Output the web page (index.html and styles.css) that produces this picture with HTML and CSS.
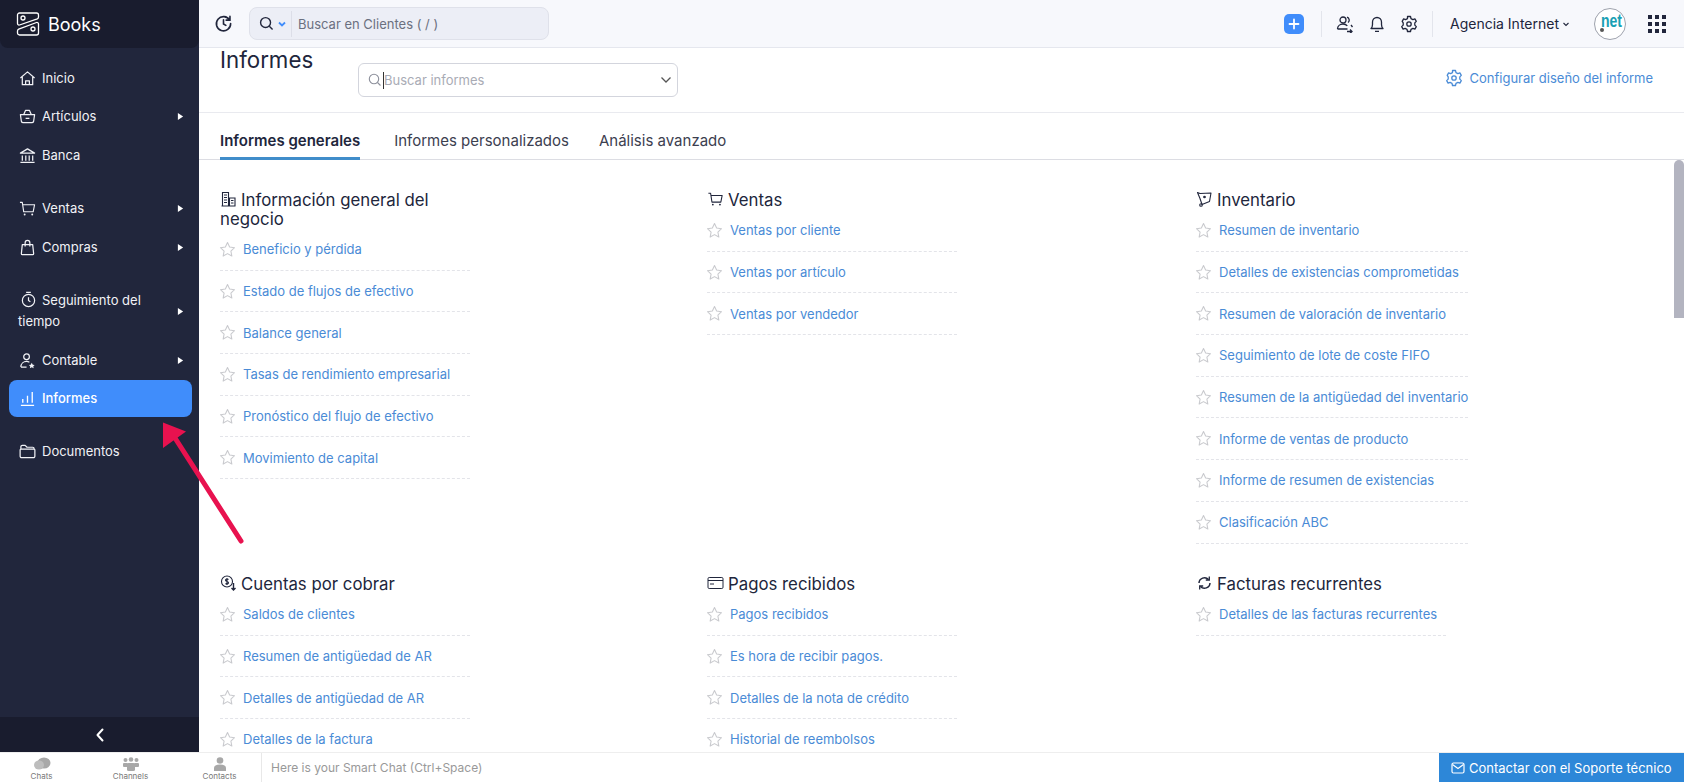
FILE: index.html
```html
<!DOCTYPE html>
<html lang="es">
<head>
<meta charset="utf-8">
<title>Informes</title>
<link rel="stylesheet" href="styles.css">
</head>
<body>
<svg class="defs" width="0" height="0" aria-hidden="true">
  <symbol id="star" viewBox="0 0 16 16"><path d="M8 1.400l2 4.300 4.600.6-3.400 3.200.9 4.700L8 11.900l-4.100 2.300.9-4.700L1.400 6.300l4.600-.6z" fill="none" stroke="currentColor" stroke-width="1" stroke-linejoin="round"/></symbol>
  <symbol id="tri" viewBox="0 0 8 10"><path d="M1 1l6 4-6 4z" fill="currentColor"/></symbol>
  <symbol id="gear" viewBox="0 0 18 18"><path d="M7.500 1.500h3l.5 2.100 1.900 1 2-.7 1.400 2.500-1.500 1.500v2.200l1.500 1.500-1.400 2.500-2-.7-1.900 1-.5 2.100h-3l-.5-2.100-1.900-1-2 .7-1.400-2.500 1.500-1.500V7.900L2.200 6.400l1.400-2.500 2 .7 1.900-1z" fill="none" stroke="currentColor" stroke-width="1.300" stroke-linejoin="round"/><circle cx="9" cy="9" r="2.200" fill="none" stroke="currentColor" stroke-width="1.300"/></symbol>
  <symbol id="cart" viewBox="0 0 18 18"><path d="M1 2.500h2.500L5 12.500h10l1.500-7.500H4" fill="none" stroke="currentColor" stroke-width="1.200" stroke-linejoin="round"/><circle cx="6" cy="15.300" r="1" fill="currentColor"/><circle cx="14" cy="15.300" r="1" fill="currentColor"/></symbol>
</svg>

<div class="app">
  <aside class="sidebar">
    <div class="brand">
      <svg class="brand-logo" viewBox="0 0 24 24" fill="none" stroke="currentColor" stroke-width="1.300" stroke-linejoin="round"><path d="M3.500 1H20.500a2 2 0 0 1 2 2V5a2 2 0 0 1-1.200 1.800L3.500 13a1.500 1.500 0 0 1-2-1.400V3a2 2 0 0 1 2-2z"/><path d="M20.500 10.500a1.500 1.500 0 0 1 2 1.400V21a2 2 0 0 1-2 2H3.500a2 2 0 0 1-2-2V19a2 2 0 0 1 1.200-1.800z"/><circle cx="7" cy="6" r="2"/><circle cx="17" cy="17" r="2"/></svg>
      <span class="brand-name">Books</span>
    </div>
    <nav class="nav">
      <a class="nav-item"><svg class="nav-ico" viewBox="0 0 18 18" fill="none" stroke="currentColor" stroke-width="1.300" stroke-linejoin="round"><path d="M1.500 8.500L9 2l7.500 6.500M3.500 7.500V15.500h11V7.500M7 15.500v-4h4v4"/></svg><span class="nav-label">Inicio</span></a>
      <a class="nav-item"><svg class="nav-ico" viewBox="0 0 18 18" fill="none" stroke="currentColor" stroke-width="1.300" stroke-linejoin="round"><path d="M1.500 7h15l-1 7a2 2 0 0 1-2 1.500h-9a2 2 0 0 1-2-1.500zM5 7l2-4.500h4L13 7M7 11h4"/></svg><span class="nav-label">Artículos</span><svg class="nav-tri"><use href="#tri"/></svg></a>
      <a class="nav-item"><svg class="nav-ico" viewBox="0 0 18 18" fill="none" stroke="currentColor" stroke-width="1.300" stroke-linejoin="round"><path d="M1.500 6.500L9 2l7.500 4.500zM3.500 9v5.500M7.200 9v5.500M10.800 9v5.500M14.500 9v5.500M1.500 16.200h15"/></svg><span class="nav-label">Banca</span></a>
      <a class="nav-item nav-gap"><svg class="nav-ico"><use href="#cart"/></svg><span class="nav-label">Ventas</span><svg class="nav-tri"><use href="#tri"/></svg></a>
      <a class="nav-item"><svg class="nav-ico" viewBox="0 0 18 18" fill="none" stroke="currentColor" stroke-width="1.300" stroke-linejoin="round"><path d="M3.500 6h11l1 9.500a1 1 0 0 1-1 1h-11a1 1 0 0 1-1-1zM6.500 8V4a2.500 2.500 0 0 1 5 0v4"/></svg><span class="nav-label">Compras</span><svg class="nav-tri"><use href="#tri"/></svg></a>
      <a class="nav-item nav-multi"><span class="nav-label"><svg class="nav-ico nav-ico-inline" viewBox="0 0 18 18" fill="none" stroke="currentColor" stroke-width="1.300"><circle cx="9" cy="10" r="6.500"/><path d="M6.500 1.500h5M9 6.500V10l2 1.500"/></svg>Seguimiento del tiempo</span><svg class="nav-tri"><use href="#tri"/></svg></a>
      <a class="nav-item"><svg class="nav-ico" viewBox="0 0 18 18" fill="none" stroke="currentColor" stroke-width="1.300"><circle cx="8" cy="5" r="3"/><path d="M2 16c0-4 3-6 6-6 1.200 0 2 .2 3 .8M2 16h6"/><path d="M13.500 11.500l1.100 1.900 2 .3-1.500 1.400.4 2-2-1-2 1 .4-2-1.500-1.400 2-.3z" fill="currentColor" stroke="none"/></svg><span class="nav-label">Contable</span><svg class="nav-tri"><use href="#tri"/></svg></a>
      <a class="nav-item nav-active"><svg class="nav-ico" viewBox="0 0 18 18" fill="none" stroke="currentColor" stroke-width="1.400"><path d="M4 13.500V9.500M9 13.500V6M14 13.500V2M2 16.200h14"/></svg><span class="nav-label">Informes</span></a>
      <a class="nav-item nav-gap"><svg class="nav-ico" viewBox="0 0 18 18" fill="none" stroke="currentColor" stroke-width="1.300" stroke-linejoin="round"><path d="M2 6V4a1.500 1.500 0 0 1 1.500-1.500h3L8.500 4.500h6A1.500 1.500 0 0 1 16 6M2 6.500h14a.8.8 0 0 1 .8.8V14a1.500 1.500 0 0 1-1.500 1.500H2.700A1.500 1.500 0 0 1 1.200 14V7.300A.8.8 0 0 1 2 6.500z"/></svg><span class="nav-label">Documentos</span></a>
    </nav>
    <div class="collapse"><svg viewBox="0 0 10 16" width="10" height="16" fill="none" stroke="currentColor" stroke-width="2" stroke-linecap="round" stroke-linejoin="round"><path d="M7.500 2.500L2.500 8l5 5.500"/></svg></div>
  </aside>

  <div class="main">
    <header class="topbar">
      <svg class="top-ico history" viewBox="0 0 20 20" fill="none" stroke="currentColor" stroke-width="1.700" stroke-linecap="round"><path d="M16.500 6.500A7.500 7.500 0 1 0 17.500 10M16.800 2.500v4h-4M10 6v4.500l2.500 1.500"/></svg>
      <div class="global-search">
        <svg class="gs-ico" viewBox="0 0 16 16" fill="none" stroke="currentColor" stroke-width="1.500"><circle cx="7" cy="7" r="5.300"/><path d="M11 11l3.500 3.500"/></svg>
        <svg class="gs-caret" viewBox="0 0 10 10" fill="none" stroke="currentColor" stroke-width="1.800"><path d="M2 3.500L5 6.500 8 3.500"/></svg>
        <span class="gs-text">Buscar en Clientes ( / )</span>
      </div>
      <div class="top-right">
        <span class="add-btn"><svg viewBox="0 0 12 12" width="12" height="12" stroke="#fff" stroke-width="1.800" stroke-linecap="round"><path d="M6 1.500v9M1.500 6h9"/></svg></span>
        <span class="vsep"></span>
        <svg class="top-ico" viewBox="0 0 18 18" fill="none" stroke="currentColor" stroke-width="1.300"><circle cx="7" cy="5" r="3"/><path d="M11 2.200a3 3 0 0 1 1 5.300M1.500 14c0-3 2.500-5 5.500-5 1.800 0 3.300.6 4.300 1.800M1.500 14h10M11 16.500h5M14 14.500l2 2-2 2M15 10l1.500 2"/></svg>
        <svg class="top-ico" viewBox="0 0 18 18" fill="none" stroke="currentColor" stroke-width="1.300" stroke-linejoin="round"><path d="M3 13.500c1-1 1.500-2 1.500-4V7a4.500 4.500 0 0 1 9 0v2.500c0 2 .5 3 1.500 4zM7 16.300h4"/></svg>
        <svg class="top-ico"><use href="#gear"/></svg>
        <span class="vsep"></span>
        <span class="org">Agencia Internet</span>
        <svg class="org-caret" viewBox="0 0 8 8" fill="none" stroke="currentColor" stroke-width="1.100"><path d="M1.500 3l2.500 2.500L6.500 3"/></svg>
        <span class="avatar"><span class="avatar-text">net</span><i class="avatar-dot"></i></span>
        <span class="apps"><i></i><i></i><i></i><i></i><i></i><i></i><i></i><i></i><i></i></span>
      </div>
    </header>

    <div class="page">
      <div class="page-head">
        <h1 class="page-title">Informes</h1>
        <div class="report-search">
          <svg class="rs-ico" viewBox="0 0 14 14" fill="none" stroke="currentColor" stroke-width="1.100"><circle cx="6" cy="6" r="4.700"/><path d="M9.500 9.500l3 3"/></svg>
          <span class="rs-text">Buscar informes</span>
          <svg class="rs-caret" viewBox="0 0 12 8" fill="none" stroke="currentColor" stroke-width="1.300"><path d="M1.500 1.500L6 6l4.500-4.500"/></svg>
        </div>
        <a class="config"><svg class="config-ico"><use href="#gear"/></svg>Configurar diseño del informe</a>
      </div>
      <div class="tabs">
        <a class="tab tab-on">Informes generales</a>
        <a class="tab">Informes personalizados</a>
        <a class="tab">Análisis avanzado</a>
      </div>
      <div class="scroll">
        <div class="grid">
          <section class="group">
            <h2 class="group-title"><svg class="g-ico" viewBox="0 0 16 16" fill="none" stroke="currentColor" stroke-width="1.100"><path d="M2 15V1.500h6V15M1 15h14M9 15V7h5.500v8M3.500 4h3M3.500 6.500h3M3.500 9h3M3.500 11.500h3M10.500 9.500h2.500M10.500 12h2.500"/></svg>Información general del negocio</h2>
            <ul class="links">
              <li class="link"><svg class="star"><use href="#star"/></svg><a>Beneficio y pérdida</a></li>
              <li class="link"><svg class="star"><use href="#star"/></svg><a>Estado de flujos de efectivo</a></li>
              <li class="link"><svg class="star"><use href="#star"/></svg><a>Balance general</a></li>
              <li class="link"><svg class="star"><use href="#star"/></svg><a>Tasas de rendimiento empresarial</a></li>
              <li class="link"><svg class="star"><use href="#star"/></svg><a>Pronóstico del flujo de efectivo</a></li>
              <li class="link"><svg class="star"><use href="#star"/></svg><a>Movimiento de capital</a></li>
            </ul>
          </section>
          <section class="group">
            <h2 class="group-title"><svg class="g-ico"><use href="#cart"/></svg>Ventas</h2>
            <ul class="links">
              <li class="link"><svg class="star"><use href="#star"/></svg><a>Ventas por cliente</a></li>
              <li class="link"><svg class="star"><use href="#star"/></svg><a>Ventas por artículo</a></li>
              <li class="link"><svg class="star"><use href="#star"/></svg><a>Ventas por vendedor</a></li>
            </ul>
          </section>
          <section class="group">
            <h2 class="group-title"><svg class="g-ico" viewBox="0 0 16 16" fill="none" stroke="currentColor" stroke-width="1.100" stroke-linejoin="round"><path d="M1 1.500l2.500 1 11-.5-1.500 8.500-7.500 3-2-6z"/><circle cx="8" cy="6" r=".8" fill="currentColor"/><circle cx="4.500" cy="14" r="1.300"/></svg>Inventario</h2>
            <ul class="links">
              <li class="link"><svg class="star"><use href="#star"/></svg><a>Resumen de inventario</a></li>
              <li class="link"><svg class="star"><use href="#star"/></svg><a>Detalles de existencias comprometidas</a></li>
              <li class="link"><svg class="star"><use href="#star"/></svg><a>Resumen de valoración de inventario</a></li>
              <li class="link"><svg class="star"><use href="#star"/></svg><a>Seguimiento de lote de coste FIFO</a></li>
              <li class="link"><svg class="star"><use href="#star"/></svg><a>Resumen de la antigüedad del inventario</a></li>
              <li class="link"><svg class="star"><use href="#star"/></svg><a>Informe de ventas de producto</a></li>
              <li class="link"><svg class="star"><use href="#star"/></svg><a>Informe de resumen de existencias</a></li>
              <li class="link"><svg class="star"><use href="#star"/></svg><a>Clasificación ABC</a></li>
            </ul>
          </section>
          <section class="group">
            <h2 class="group-title"><svg class="g-ico" viewBox="0 0 16 16" fill="none" stroke="currentColor" stroke-width="1.100"><circle cx="6.500" cy="6.500" r="5.500"/><path d="M8 4.500c-.8-.8-3-.8-3 .7s3 1 3 2.600-2.200 1.500-3 .7M6.500 3v7"/><path d="M13 8v7M11 13l2 2 2-2" stroke-width="1.400"/></svg>Cuentas por cobrar</h2>
            <ul class="links">
              <li class="link"><svg class="star"><use href="#star"/></svg><a>Saldos de clientes</a></li>
              <li class="link"><svg class="star"><use href="#star"/></svg><a>Resumen de antigüedad de AR</a></li>
              <li class="link"><svg class="star"><use href="#star"/></svg><a>Detalles de antigüedad de AR</a></li>
              <li class="link"><svg class="star"><use href="#star"/></svg><a>Detalles de la factura</a></li>
            </ul>
          </section>
          <section class="group">
            <h2 class="group-title"><svg class="g-ico" viewBox="0 0 16 16" fill="none" stroke="currentColor" stroke-width="1"><rect x=".5" y="2.500" width="15" height="11" rx="1.200"/><path d="M.5 5.500h15M2.500 9h4" stroke-width="1.200"/></svg>Pagos recibidos</h2>
            <ul class="links">
              <li class="link"><svg class="star"><use href="#star"/></svg><a>Pagos recibidos</a></li>
              <li class="link"><svg class="star"><use href="#star"/></svg><a>Es hora de recibir pagos.</a></li>
              <li class="link"><svg class="star"><use href="#star"/></svg><a>Detalles de la nota de crédito</a></li>
              <li class="link"><svg class="star"><use href="#star"/></svg><a>Historial de reembolsos</a></li>
            </ul>
          </section>
          <section class="group">
            <h2 class="group-title"><svg class="g-ico" viewBox="0 0 16 16" fill="none" stroke="currentColor" stroke-width="1.500"><path d="M2.500 8a5.500 5.500 0 0 1 9.500-3.500M13.500 8A5.500 5.500 0 0 1 4 11.500"/><path d="M12.800 1.500V5H9.300M3.200 14.500V11h3.500" stroke-width="1.300"/></svg>Facturas recurrentes</h2>
            <ul class="links">
              <li class="link"><svg class="star"><use href="#star"/></svg><a>Detalles de las facturas recurrentes</a></li>
            </ul>
          </section>
        </div>
        <span class="scrollbar"></span>
      </div>
    </div>
  </div>
</div>

<footer class="bottombar">
  <div class="dock">
    <div class="dock-item"><svg viewBox="0 0 18 14" width="18" height="14" fill="#a8a8a8"><ellipse cx="11" cy="6" rx="6.500" ry="5.500"/><ellipse cx="6" cy="8" rx="5" ry="4.500" fill="#bdbdbd"/></svg><span>Chats</span></div>
    <div class="dock-item"><svg viewBox="0 0 18 14" width="18" height="14" fill="#a8a8a8"><circle cx="3.500" cy="3" r="2"/><circle cx="9" cy="2.500" r="2.300"/><circle cx="14.500" cy="3" r="2"/><rect x="1" y="6" width="5" height="4" rx="1"/><rect x="12" y="6" width="5" height="4" rx="1"/><rect x="5" y="6" width="8" height="8" rx="1.500"/></svg><span>Channels</span></div>
    <div class="dock-item"><svg viewBox="0 0 18 14" width="18" height="14" fill="#a8a8a8"><circle cx="9" cy="3.500" r="3.300"/><path d="M3 14v-3c0-2 2-3.500 6-3.500s6 1.500 6 3.500v3z"/></svg><span>Contacts</span></div>
  </div>
  <div class="smart">Here is your Smart Chat (Ctrl+Space)</div>
  <a class="support"><svg viewBox="0 0 14 12" width="14" height="12" fill="none" stroke="currentColor" stroke-width="1.200"><rect x="1" y="1" width="12" height="10" rx="1.500"/><path d="M1.500 2.500L7 6.500l5.500-4"/></svg>Contactar con el Soporte técnico</a>
</footer>

<svg class="pointer" viewBox="0 0 100 130" aria-hidden="true"><path d="M78 120L12 17" stroke="#e8124f" stroke-width="5" stroke-linecap="round"/><path d="M0 1.500L23 10.500 0 27z" fill="#e8124f"/></svg>
</body>
</html>
```

FILE: styles.css
```css
* { box-sizing: border-box; }
html, body { margin: 0; height: 100%; overflow: hidden; }
body { font-family: Inter, "Liberation Sans", sans-serif; font-size: 13px; color: #21263c; background: #fff; }
.defs { position: absolute; }
a { text-decoration: none; color: inherit; }
h1, h2, ul { margin: 0; padding: 0; }
ul { list-style: none; }

.app { display: flex; height: 752px; }

.sidebar { width: 199px; flex: none; display: flex; flex-direction: column; background: #21263c; color: #f1f2f6; }
.brand { height: 48px; flex: none; display: flex; align-items: center; gap: 8px; padding-left: 16px; background: #191c2e; border-radius: 0 0 8px 8px; color: #fff; }
.brand-logo { width: 24px; height: 24px; }
.brand-name { font-size: 18px; font-weight: 400; }
.nav { flex: 1; padding: 11px 7px 0 9px; }
.nav-item { display: flex; align-items: center; min-height: 38px; padding: 0 8px 0 10px; border-radius: 8px; font-size: 13px; line-height: 21px; margin-bottom: 1px; }
.nav-item:first-child { margin-bottom: 0; }
.nav-gap { margin-top: 15px; }
.nav-ico { width: 17px; height: 17px; flex: none; margin-right: 6px; }
.nav-ico-inline { display: inline-block; vertical-align: -3px; margin-right: 5px; margin-left: 2px; }
.nav-label { flex: 1; }
.nav-tri { width: 7px; height: 9px; flex: none; color: #fff; }
.nav-multi { margin-top: 19px; padding-top: 5px; padding-bottom: 8px; padding-left: 9px; }
.nav-active { background: #408dfb; color: #fff; font-weight: 500; min-height: 37px; margin-bottom: 2px; }
.collapse { height: 35px; flex: none; display: flex; align-items: center; justify-content: center; background: #191c2e; color: #fff; }

.main { flex: 1; min-width: 0; display: flex; flex-direction: column; }
.topbar { height: 48px; flex: none; display: flex; align-items: center; padding: 0 18px 0 15px; background: #f7f8fc; border-bottom: 1px solid #e5e7ee; }
.top-ico { width: 18px; height: 18px; flex: none; color: #21263c; }
.history { width: 19px; height: 19px; margin-right: 16px; }
.global-search { width: 300px; height: 33px; display: flex; align-items: center; padding-left: 9px; background: #eceef6; border: 1px solid #dfe1ea; border-radius: 8px; }
.gs-ico { width: 15px; height: 15px; color: #21263c; }
.gs-caret { width: 10px; height: 10px; margin-left: 3px; color: #408dfb; }
.gs-text { margin-left: 4px; padding-left: 6px; line-height: 26px; border-left: 1px solid #dcdee8; color: #6b7080; font-size: 13px; }
.top-right { margin-left: auto; display: flex; align-items: center; gap: 14px; }
.add-btn { width: 20px; height: 20px; margin-right: 3px; display: flex; align-items: center; justify-content: center; background: #408dfb; border-radius: 5px; }
.vsep { width: 1px; height: 26px; background: #e3e5ec; }
.org { font-size: 14px; margin-left: 3px; }
.org-caret { width: 8px; height: 8px; margin-left: -11px; }
.avatar { position: relative; width: 32px; height: 32px; margin-left: 10px; display: flex; align-items: flex-start; justify-content: center; padding-left: 3px; background: #fff; border: 1px solid #9ea2ad; border-radius: 50%; }
.avatar-text { font-size: 18px; line-height: 24px; font-weight: 600; color: #19a0b4; font-family: "Liberation Sans", sans-serif; transform: scaleX(.78); }
.avatar-dot { position: absolute; left: 5px; bottom: 7px; width: 4px; height: 4px; border-radius: 50%; background: #555; }
.apps { margin-left: 8px; display: grid; grid-template-columns: repeat(3, 4px); gap: 3px; }
.apps i { width: 4px; height: 4px; background: #21263c; }

.page { flex: 1; min-height: 0; display: flex; flex-direction: column; }
.page-head { height: 65px; flex: none; display: flex; padding: 0 31px 0 21px; border-bottom: 1px solid #e9eaef; }
.page-title { width: 138px; font-size: 22.300px; font-weight: 400; line-height: 24px; color: #21263c; }
.report-search { width: 320px; height: 34px; margin-top: 15px; display: flex; align-items: center; padding: 0 5px 0 9px; border: 1px solid #d3d5dd; border-radius: 6px; }
.rs-ico { width: 14px; height: 14px; color: #8d909c; }
.rs-text { flex: 1; margin-left: 1px; padding-left: 0; border-left: 1px solid #333; line-height: 17px; color: #a9abb5; font-size: 13px; }
.rs-caret { width: 12px; height: 8px; color: #555; }
.config { margin-left: auto; margin-top: 16px; height: 28px; display: flex; align-items: center; gap: 7px; color: #4a8bd6; font-size: 13px; }
.config-ico { width: 18px; height: 18px; }

.tabs { height: 47px; flex: none; display: flex; gap: 30px; padding-left: 21px; border-bottom: 1px solid #dcdde3; }
.tab { display: flex; align-items: center; font-size: 15px; color: #3c4050; margin-bottom: -1px; border-bottom: 3px solid transparent; padding-top: 10px; }
.tab-on { font-weight: 600; color: #21263c; margin-right: 4px; border-bottom-color: #408dca; }

.scroll { position: relative; flex: 1; min-height: 0; overflow: hidden; padding: 31px 0 0 21px; }
.scrollbar { position: absolute; right: 0; top: 0; width: 10px; height: 158px; background: #b3b4c0; border-radius: 5px 5px 0 0; }
.grid { display: grid; grid-template-columns: 487px 489px 488px; grid-template-rows: 384px auto; }
.group-title { width: 250px; font-size: 16.800px; font-weight: 400; line-height: 19px; color: #21263c; }
.g-ico { width: 17px; height: 16px; vertical-align: -1px; margin-right: 4px; color: #21263c; }
.links { width: fit-content; min-width: 250px; }
.link { display: flex; align-items: center; height: 41.700px; border-bottom: 1px dashed #e3e4e9; font-size: 13px; }
.star { width: 17px; height: 17px; margin-left: -1px; margin-right: 7px; color: #c9cace; flex: none; }
.link a { color: #4a8bd6; white-space: nowrap; }

.bottombar { height: 30px; display: flex; background: #fff; border-top: 1px solid #eee; }
.dock { width: 262px; flex: none; display: grid; grid-template-columns: repeat(3, 89px); justify-content: center; border-right: 1px solid #e8e8e8; }
.dock-item { display: flex; flex-direction: column; align-items: center; padding-top: 4px; font-size: 8px; line-height: 11px; color: #777; }
.smart { flex: 1; padding-left: 9px; line-height: 29px; font-size: 12px; color: #999; }
.support { width: 245px; flex: none; display: flex; align-items: center; gap: 4px; padding-left: 12px; background: #2d87d8; color: #fff; font-size: 13px; }

.pointer { position: absolute; left: 163px; top: 421px; width: 100px; height: 130px; }
```
